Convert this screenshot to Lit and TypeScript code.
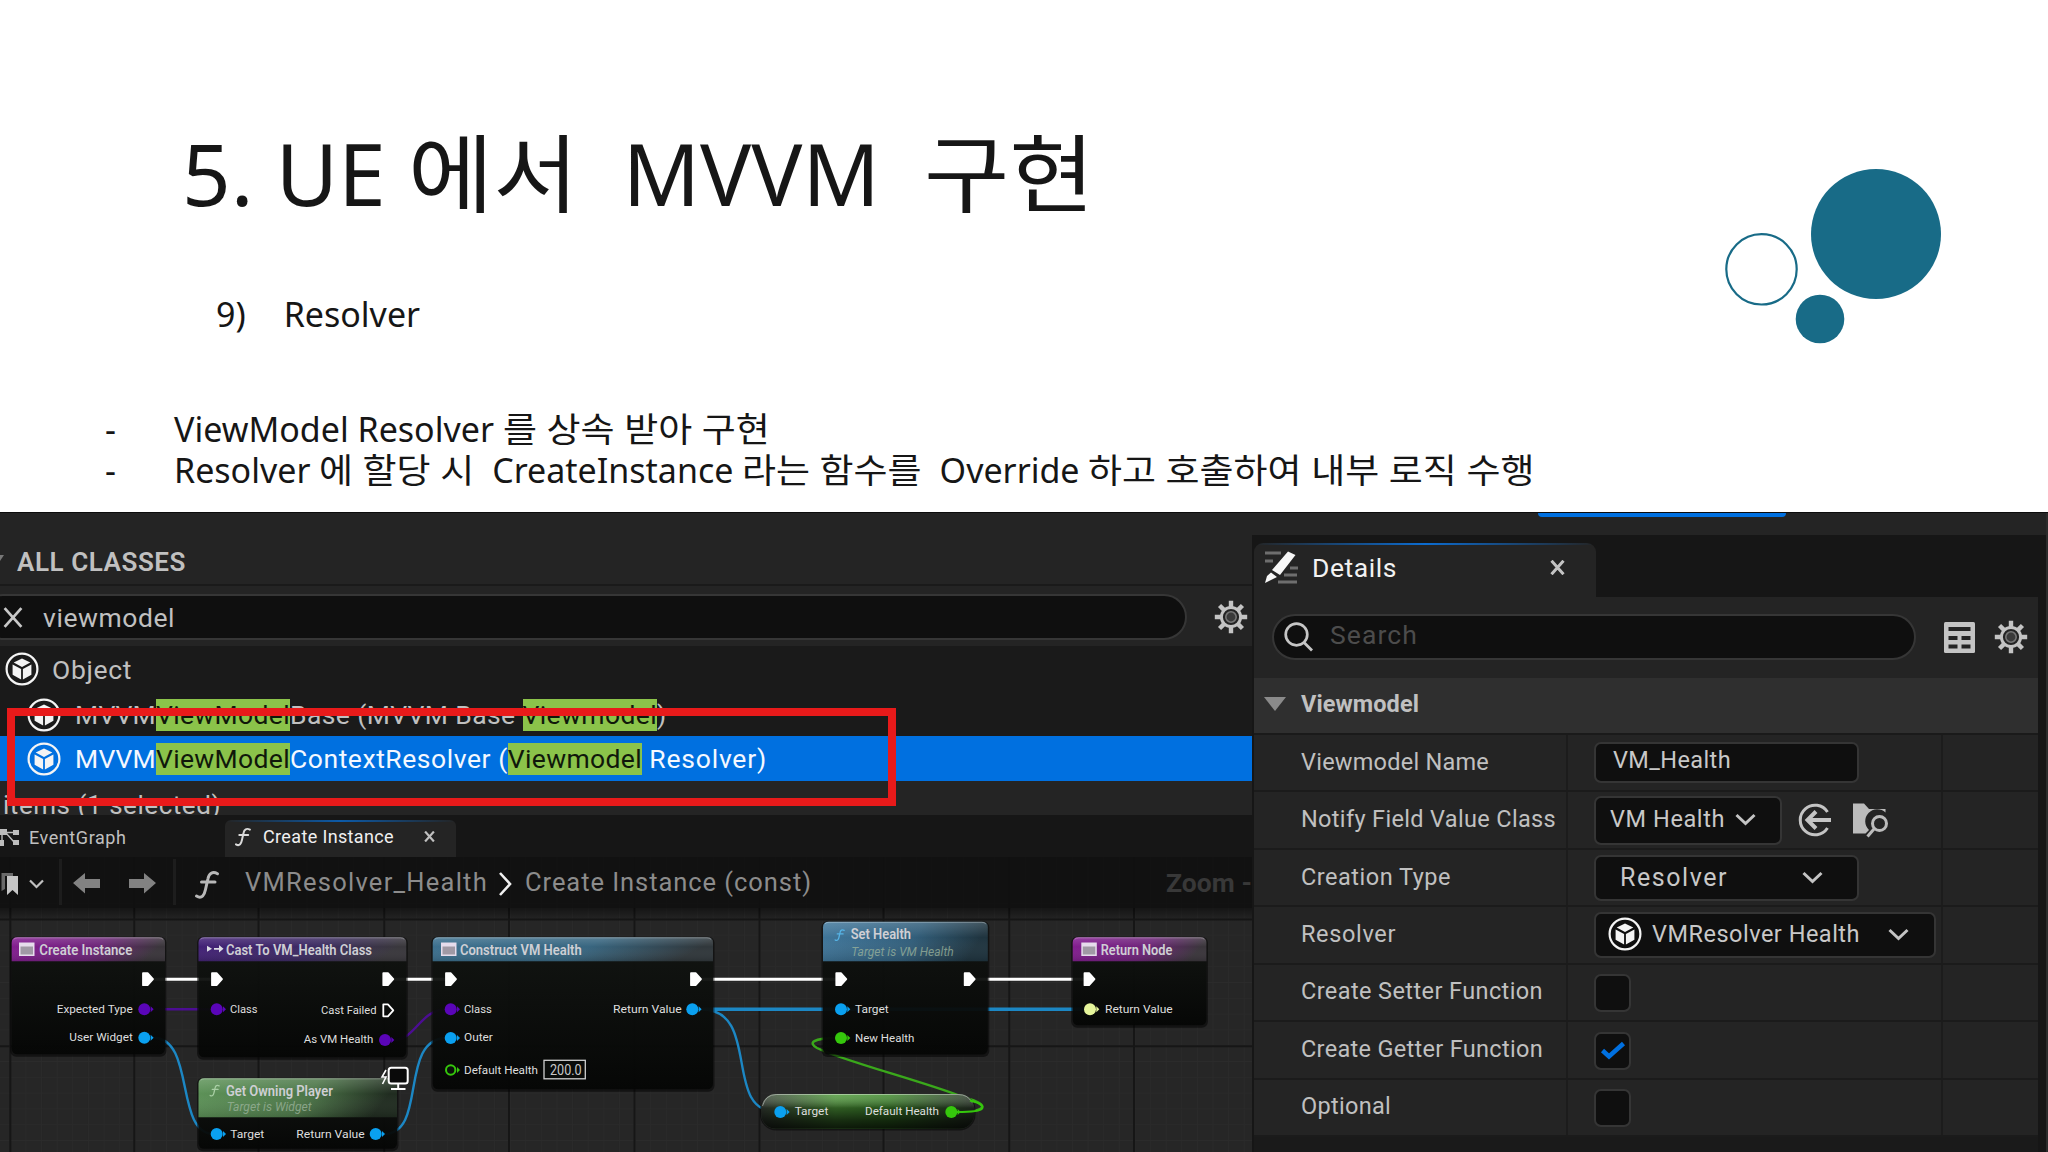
import { LitElement, html, svg, css, nothing } from "lit";
import { customElement } from "lit/decorators.js";

const cube = html`<svg class="cube" viewBox="0 0 34 34">
  <circle cx="17" cy="17" r="15.4" fill="none" stroke="currentColor" stroke-width="2.2" />
  <path fill="currentColor" d="M17 6.5 25.3 10.6 17 15 8.7 10.6ZM7.6 12.6 16.1 17v10.6L7.6 22.8ZM26.4 12.6 17.9 17v10.6l8.5-4.8Z" />
</svg>`;

const gear = html`<svg class="gear" viewBox="0 0 34 34">
  <g stroke="#c4c4c4" stroke-width="4.4">
    ${[0, 45, 90, 135].map((a) => svg`<path d="M17 .8V7M17 27v6.2" transform="rotate(${a} 17 17)" />`)}
  </g>
  <circle cx="17" cy="17" r="9.6" fill="#242424" stroke="#c4c4c4" stroke-width="3" />
  <circle cx="17" cy="17" r="5.2" fill="#3a3a3a" stroke="#777" stroke-width="1.6" />
</svg>`;

const chevron = html`<svg class="chevron" viewBox="0 0 21 13">
  <path d="M1.5 2 10.5 10.5 19.5 2" fill="none" stroke="#c4c4c4" stroke-width="3" />
</svg>`;

const cross = (cls: string) => html`<svg class=${cls} viewBox="0 0 20 20">
  <path d="M2 1 18 19M18 1 2 19" fill="none" stroke="currentColor" stroke-width="4" />
</svg>`;

/** Text tracked out (or in) to a given width. */
const fit = (text: string, width: number, cls = "") =>
  html`<span class="fit ${cls}" data-width=${width}>${text}</span>`;

/** Hangul run, widened so that each syllable fills a full em. */
const ko = (text: string) => html`<span class="ko">${text}</span>`;
const HANGUL_STRETCH = 1.087;

const func = (x: number, y: number, h: number, color: string) => svg`
  <g transform="translate(${x} ${y}) scale(${h / 28})" fill="none" stroke=${color} stroke-width="3" stroke-linecap="round">
    <path d="M1.5 25.5C7 29 9.500 24 10.500 19L13 8C14 3 17.500 .5 22.500 3.200M6.500 11.500H20" />
  </g>`;

const word = (x: number, y: number, w: number, text: string, cls = "pin") =>
  svg`<text class=${cls} x=${x} y=${y} textLength=${w} lengthAdjust="spacingAndGlyphs">${text}</text>`;

const exec = (x: number, y = 979.2, open = false) => svg`
  <path d="M${x + 1} ${y - 6}h4.600l5.400 6-5.400 6h-4.600Z" fill=${open ? "none" : "#fff"} stroke="#fff" stroke-width="1.800" stroke-linejoin="round" />`;

const BLUE = "#0aa0f0";
const VIOLET = "#5a05b8";
const GREEN = "#35c70c";

const dot = (x: number, y: number, color: string, open = false) => svg`
  <circle cx=${x} cy=${y} r=${open ? 4.7 : 6} fill=${open ? "#0c100c" : color} stroke=${color} stroke-width=${open ? 2 : 0} />
  <path d="M${x + 6.3} ${y - 3}l3 3-3 3Z" fill=${color} />`;

interface GraphNode {
  x: number; y: number; w: number; h: number; head: number; fill: string;
}
const box = (n: GraphNode) => svg`
  <rect x=${n.x - 1.5} y=${n.y - .5} width=${n.w + 3} height=${n.h + 3} rx="6" fill="#000" opacity=".5" />
  <rect x=${n.x} y=${n.y} width=${n.w} height=${n.h} rx="5.500" fill="url(#body)" />
  <path fill="url(#${n.fill})" d="M${n.x} ${n.y + n.head}V${n.y + 5.5}q0-5.500 5.500-5.500H${n.x + n.w - 5.5}q5.500 0 5.500 5.500V${n.y + n.head}Z" />
  <path fill="url(#gloss)" d="M${n.x} ${n.y + n.head}V${n.y + 5.5}q0-5.500 5.500-5.500H${n.x + n.w - 5.5}q5.500 0 5.500 5.500V${n.y + n.head}Z" />
  <path fill="none" stroke="#fff" stroke-opacity=".3" d="M${n.x + 2} ${n.y + 2}q1.500-1.500 4-1.500H${n.x + n.w - 6}q2.500 0 4 1.500" />`;

const form = (x: number) => svg`
  <rect x=${x} y="942.500" width="15.500" height="13.500" fill="#e6dcec" />
  <rect x=${x + 1.5} y="946.500" width="12.500" height="8" fill="#000" opacity=".3" />`;

const ramp = (id: string, a: string, b: string, c: string) => svg`
  <linearGradient id=${id} x1="0" x2="1" y1="0" y2=".15">
    <stop offset="0" stop-color=${a} /><stop offset=".6" stop-color=${b} /><stop offset="1" stop-color=${c} />
  </linearGradient>`;

const COLS = [10.3, 134.3, 258.5, 384.3, 509, 634.5, 759.5, 883.5, 1009.3, 1134];
const MINOR_X = Array.from({ length: 80 }, (_, i) => 10.3 + i * 15.62);
const MINOR_Y = Array.from({ length: 17 }, (_, i) => 903.5 + i * 15.8);

@customElement("node-graph")
class NodeGraph extends LitElement {
  static styles = css`
    :host { display: block; height: 100%; }
    svg { display: block; width: 1252px; height: 295px; }
    text { font-family: Roboto, "Liberation Sans", sans-serif; }
    .pin { font-size: 11.4px; fill: #dedede; }
    .title { font-size: 14.5px; font-weight: 600; fill: #cfcfd4; }
    .sub { font-size: 12px; font-style: italic; fill: #9db59d; opacity: .75; }
    .num { font-size: 14px; fill: #c8c8c8; }
  `;

  render() {
    return html`<svg viewBox="0 857 1252 295">
      <defs>
        <linearGradient id="body" x2="0" y2="1">
          <stop offset="0" stop-color="#121512" stop-opacity=".9" /><stop offset="1" stop-color="#050605" stop-opacity=".92" />
        </linearGradient>
        <linearGradient id="gloss" x2="0" y2="1">
          <stop offset="0" stop-color="#fff" stop-opacity=".16" /><stop offset=".4" stop-color="#fff" stop-opacity="0" />
          <stop offset="1" stop-color="#000" stop-opacity=".12" />
        </linearGradient>
        <linearGradient id="fade" x2="0" y2="1">
          <stop offset="0" stop-color="#000" stop-opacity=".45" /><stop offset="1" stop-color="#000" stop-opacity="0" />
        </linearGradient>
        ${ramp("purple", "#841c92", "#6d2478", "#3a353b")}
        ${ramp("indigo", "#432078", "#3c2b62", "#39373c")}
        ${ramp("steel", "#3c708f", "#386680", "#30373b")}
        ${ramp("sea", "#41789d", "#325e7a", "#1f343f")}
        ${ramp("moss", "#5e9459", "#4c7648", "#202c20")}
        <linearGradient id="lime">
          <stop offset="0" stop-color="#3c453b" /><stop offset=".35" stop-color="#4f9a3a" />
          <stop offset=".6" stop-color="#3f8a2c" /><stop offset="1" stop-color="#2f3a2e" />
        </linearGradient>
        <linearGradient id="shade" x2="0" y2="1">
          <stop offset="0" stop-color="#fff" stop-opacity=".15" /><stop offset=".4" stop-color="#000" stop-opacity=".4" />
          <stop offset=".75" stop-color="#000" stop-opacity=".7" /><stop offset="1" stop-color="#000" stop-opacity=".85" />
        </linearGradient>
      </defs>
      <rect y="857" width="1252" height="295" fill="#262626" />
      <g stroke="#2b2b2b" stroke-width="1">
        ${MINOR_X.map((x) => svg`<path d="M${x} 857V1152" />`)}
        ${MINOR_Y.map((y) => svg`<path d="M0 ${y}H1252" />`)}
      </g>
      <g stroke="#161616" stroke-width="2">
        ${COLS.map((x) => svg`<path d="M${x} 857V1152" />`)}
        <path d="M0 919.500H1252M0 1046.300H1252" />
      </g>
      <rect y="908" width="1252" height="13" fill="url(#fade)" />

      <g fill="none">
        <path stroke="#fff" stroke-width="3" d="M153 979.200H212M394 979.200H446M701 979.200H836M975 979.200H1085" />
        <path stroke=${VIOLET} stroke-opacity=".75" stroke-width="2.400" d="M153 1009.300H212M394 1040C415 1040 420 1010 446 1009.300" />
        <path stroke="#1c87c4" stroke-width="3.400" d="M701 1009.300H1085" />
        <g stroke="#1c87c4" stroke-width="2.400">
          <path d="M153 1037.700C196 1037.700 174 1134 214 1134" />
          <path d="M384 1134C428 1134 398 1038 447 1038" />
          <path d="M701 1009.300C762 1009.300 722 1112 777 1112" />
        </g>
        <path stroke="#3aa81b" stroke-width="2.400" d="M838 1038C812 1038 808 1043 817 1048C840 1060 925 1082 960 1096C974 1100 984 1104 982 1107Q980 1112 956 1112" />
      </g>

      ${box({ x: 11.7, y: 937.3, w: 153.3, h: 117, head: 24, fill: "purple" })}
      ${form(19)} ${word(39.3, 955, 93, "Create Instance", "title")}
      ${exec(142)}
      ${word(56.7, 1013, 76, "Expected Type")} ${dot(144.3, 1009.3, VIOLET)}
      ${word(69.3, 1041, 63.5, "User Widget")} ${dot(144.3, 1037.8, BLUE)}

      ${box({ x: 198.5, y: 937.3, w: 207.800, h: 120, head: 24, fill: "indigo" })}
      <path d="M207 945.800l5 3-5 3ZM214 948h3v1.800h-3ZM217 948h2v-3l4.500 3.800-4.500 3.800v-2.800h-2Z" fill="#dcdce4" />
      ${word(226, 955, 146, "Cast To VM_Health Class", "title")}
      ${exec(211)} ${exec(382.3)}
      ${dot(216.7, 1009.3, VIOLET)} ${word(230, 1013, 27.5, "Class")}
      ${word(321, 1014, 55.5, "Cast Failed")} ${exec(382.3, 1010.3, true)}
      ${word(303.7, 1043, 69.7, "As VM Health")} ${dot(385, 1040, VIOLET)}

      ${box({ x: 198.5, y: 1078.3, w: 198.5, h: 70.5, head: 39, fill: "moss" })}
      ${func(209.5, 1084.5, 12, "#a9cfa5")}
      ${word(226, 1095.5, 106.800, "Get Owning Player", "title")}
      ${word(226.7, 1111.3, 85, "Target is Widget", "sub")}
      ${dot(216.7, 1134, BLUE)} ${word(230.3, 1137.500, 34, "Target")}
      ${word(296.3, 1137.500, 68.400, "Return Value")} ${dot(375.7, 1134, BLUE)}
      <g stroke="#fff" stroke-width="2" fill="#0a0a0a">
        <rect x="388.700" y="1067.700" width="19" height="15.800" rx="2.500" />
        <path d="M398.200 1084v5M391 1089h14.500" />
        <path stroke-width="1.600" fill="none" d="M386 1070l-4 7h4l-3.500 7" />
      </g>

      ${box({ x: 432.7, y: 937.3, w: 280.3, h: 152, head: 24, fill: "steel" })}
      ${form(441)} ${word(460, 955, 121.700, "Construct VM Health", "title")}
      ${exec(445)} ${exec(690)}
      ${dot(450.7, 1009.3, VIOLET)} ${word(464, 1013, 27.800, "Class")}
      ${word(613, 1013, 68.700, "Return Value")} ${dot(692.3, 1009.3, BLUE)}
      ${dot(450.7, 1038, BLUE)} ${word(464, 1041, 28.800, "Outer")}
      ${dot(450.7, 1070, GREEN, true)} ${word(464, 1074, 74, "Default Health")}
      <rect x="544" y="1060.300" width="41.300" height="18.500" fill="#0a0c0a" stroke="#d0d0d0" stroke-width="1.300" />
      ${word(550, 1075.300, 31.700, "200.0", "num")}

      ${box({ x: 823, y: 921.8, w: 164.800, h: 132.800, head: 39.5, fill: "sea" })}
      ${func(834.5, 929, 12, "#56b4e6")}
      ${word(850.7, 939, 60.300, "Set Health", "title")}
      ${word(851.3, 955.5, 102.400, "Target is VM Health", "sub")}
      ${exec(835.3)} ${exec(963.700)}
      ${dot(841, 1009.3, BLUE)} ${word(855, 1013, 33.700, "Target")}
      ${dot(841, 1038, GREEN)} ${word(855, 1042, 59.300, "New Health")}

      ${box({ x: 1072.7, y: 937.3, w: 133.700, h: 88, head: 24, fill: "purple" })}
      ${form(1081.3)} ${word(1100.7, 955, 71.700, "Return Node", "title")}
      ${exec(1083.500)}
      ${dot(1090, 1009.3, "#e6f59b")} ${word(1105, 1013, 67.700, "Return Value")}

      <rect x="760" y="1094" width="215.500" height="36.500" rx="16" fill="#000" opacity=".5" />
      <rect x="761" y="1094" width="213.300" height="34.800" rx="15" fill="url(#lime)" />
      <rect x="761" y="1094" width="213.300" height="34.800" rx="15" fill="url(#shade)" />
      <path d="M762.500 1106q3-11.500 14-11.500H958q10 0 14 8" fill="none" stroke="#fff" stroke-opacity=".4" />
      <path stroke=${GREEN} fill="none" stroke-width="2.200" d="M970 1100.500C980 1103 984 1106 982 1108.500Q980 1112 957 1112" />
      ${dot(780.3, 1112, BLUE)} ${word(794.7, 1115.200, 33.600, "Target")}
      ${word(865, 1115.200, 74, "Default Health")} ${dot(951.3, 1112, GREEN)}
    </svg>`;
  }
}

@customElement("app-root")
class AppRoot extends LitElement {
  static styles = css`
    :host {
      display: block; width: 2048px; height: 1152px; overflow: hidden; position: relative;
      background: #fff; color: #c0c0c0; font-family: Roboto, "Liberation Sans", sans-serif; font-size: 25px;
    }
    * { box-sizing: border-box; }
    svg { display: block; flex: none; }
    .fit { white-space: pre; display: inline-block; }
    .ko { display: inline-block; white-space: pre; transform-origin: 0 0; }
    .slide {
      height: 512px; padding: 123px 0 0 105px; color: #161616;
      font-family: "Noto Sans", "Noto Sans CJK KR", sans-serif; position: relative; white-space: pre;
    }
    .slide h1 { margin: 0 0 71px 77px; font-size: 85.3px; line-height: 100px; font-weight: 400; }
    .topic { display: flex; gap: 38px; margin: 0 0 74px 111px; font-size: 34px; line-height: 41px; }
    .bullets { font-size: 34px; line-height: 41.3px; display: grid; grid-template-columns: 69px auto; }
    .art { position: absolute; left: 1720px; top: 160px; }
    .editor { display: grid; grid-template-columns: 1252px 796px; height: 640px; background: #161616; border-top: 1px solid #0c0c0c; }
    .left { display: grid; grid-template-rows: 73px 60px 90px 45px 34px 42px 295px; overflow: hidden; min-width: 0; }
    .caption { background: #242424; border-bottom: 2px solid #1a1a1a; padding: 27px 0 0 17px; font-weight: 600; font-size: 26px; line-height: 46px; margin-top: -1px; display: flex; }
    .caption svg { margin: 16px 0 0 -17px; width: 17px; height: 8px; }
    .findbar { background: #242424; display: flex; align-items: center; padding: 2px 4px 0 0; justify-content: space-between; }
    .find { width: 1207px; margin-left: -20px; height: 46px; border: 2px solid #363636; border-radius: 23px; background: #0f0f0f; display: flex; align-items: center; padding-left: 20px; gap: 19px; font-size: 26.5px; }
    .wide { width: 22px; height: 21px; color: #c8c8c8; }
    .wide path { stroke-width: 2.6; }
    .cube { width: 34px; height: 34px; color: #f4f4f4; }
    .gear { width: 34px; height: 34px; }
    .classes { background: #1a1a1a; font-size: 26.5px; }
    .class { display: flex; align-items: center; height: 45px; padding-left: 27px; gap: 14px; white-space: pre; }
    .class.parent { padding-left: 5px; gap: 13px; height: 46px; }
    .class.picked { background: #0070e0; color: #f4f8ff; font-size: 26.5px; }
    .line { display: flex; }
    .hit { background: #8bc34a; color: #10180a; line-height: 32px; }
    .count { background: #242424; font-size: 26px; line-height: 40px; padding: 4px 0 0 3px; overflow: hidden; }
    .mark { position: absolute; left: 6.5px; top: 708px; width: 889.5px; height: 98px; border: 8px solid #e81a1a; }
    .tabs { display: flex; align-items: center; background: #161616; font-size: 18px; padding-top: 2px; }
    .tab { display: flex; align-items: center; }
    .tab.idle { width: 225px; gap: 10px; }
    .tab.open { width: 231px; height: 37px; margin-top: 3px; padding-bottom: 4px; background: linear-gradient(90deg, #242424, #0c5aa8 50%, #242424) 0 0 / 100% 2px no-repeat #242424; border-radius: 6px 6px 0 0; color: #f0f0f0; padding-left: 10px; }
    .tab.open .fit { margin-left: 12px; margin-right: 30px; }
    .small { width: 11px; height: 11px; color: #c0c0c0; }
    .board { position: relative; height: 295px; }
    .tools { position: absolute; left: 0; top: 0; width: 1252px; height: 51px; background: #0f0f0fe6; display: flex; align-items: center; color: #8c8c8c; font-size: 25.5px; padding-bottom: 1px; }
    .tools .sep { width: 3px; height: 46px; background: #1d1d1d; }
    .tools .zoom { font-weight: 700; color: #383838; margin-left: auto; font-size: 26.5px; }
    .right { position: relative; display: grid; grid-template-rows: 22px 62px 81px 55px 404px 16px; padding: 0 10px 0 2px; background: linear-gradient(90deg, #161616 794px, #2c2c2c 794px); }
    .strip { background: #242424; margin: 0 -8px 0 -2px; padding-left: 286px; }
    .strip div { width: 248px; height: 4px; background: #0070e0; border-radius: 0 0 6px 6px; }
    .dtab { width: 342px; height: 54px; margin-top: 8px; border-radius: 9px 9px 0 0; padding: 0 31px 6px 10px; color: #f2f2f2; font-size: 26.5px;
      background: linear-gradient(90deg, #242424, #0c6cd0 50%, #242424) 0 0 / 100% 2px no-repeat #242424; display: flex; align-items: center; }
    .dtab .fit { margin: 0 auto 0 14px; }
    .close { width: 15px; height: 15px; color: #c4c4c4; }
    .dfind { background: #242424; display: flex; align-items: center; padding: 0 9px 1px 18px; }
    .dfind .pill { width: 644px; height: 46px; border: 2px solid #363636; border-radius: 23px; background: #0f0f0f; display: flex; align-items: center; padding: 0 0 5px 10px; gap: 16px; color: #4c4c4c; font-size: 26.5px; margin-right: 28px; }
    .dfind .pill svg { margin-top: 4px; }
    .dfind .gear { margin-left: 19px; }
    .section { background: #2f2f2f; display: flex; align-items: center; gap: 15px; padding: 0 0 3px 10px; font-weight: 700; font-size: 23.5px; }
    .rows { display: grid; grid-template-rows: repeat(7, 1fr); border-top: 2px solid #1a1a1a; }
    .row { display: grid; grid-template-columns: 312px 375px auto; background: #242424; border-bottom: 2px solid #1b1b1b; }
    .row > div { display: flex; align-items: center; border-left: 2px solid #1c1c1c; padding-left: 26px; font-size: 23.5px; }
    .row > .name { border: 0; padding: 0 0 2px 47px; }
    .field { background: #0f0f0f; border: 2px solid #353535; border-radius: 7px; display: flex; align-items: center; color: #c8c8c8; flex: none; }
    .text { width: 265px; height: 41px; padding: 0 0 5px 17px; }
    .klass { width: 188px; height: 49px; padding: 0 24px 2px 14px; justify-content: space-between; }
    .kind { width: 265px; height: 46px; padding: 0 34px 0 24px; justify-content: space-between; font-size: 25px; }
    .asset { width: 342px; height: 46px; padding: 0 25px 1px 12px; }
    .asset .fit { margin: 0 auto 0 10px; }
    .check { width: 37px; height: 38px; margin-top: 2px; justify-content: center; }
    .chevron { width: 21px; height: 13px; }
    .use { margin-left: 16px; }
    .browse { margin-left: 21px; }
    .end { background: #1a1a1a; }
  `;

  firstUpdated() {
    this.renderRoot.querySelectorAll<HTMLElement>(".fit").forEach((el) => {
      const target = Number(el.dataset.width);
      const gap = target - el.getBoundingClientRect().width;
      el.style.letterSpacing = `${gap / (el.textContent ?? " ").length}px`;
    });
    this.renderRoot.querySelectorAll<HTMLElement>(".ko").forEach((el) => {
      const width = el.getBoundingClientRect().width;
      el.style.marginRight = `${width * (HANGUL_STRETCH - 1)}px`;
      el.style.transform = `scaleX(${HANGUL_STRETCH})`;
    });
  }

  private row(name: string, width: number, value: unknown) {
    return html`<div class="row">
      <div class="name">${fit(name, width)}</div>
      <div>${value}</div>
      <div></div>
    </div>`;
  }

  private box(checked: boolean) {
    return html`<div class="field check">
      ${checked
        ? html`<svg width="26" height="20" viewBox="0 0 26 20"><path d="M2.500 9.500 9 15.500 23.500 2.500" fill="none" stroke="#0070e0" stroke-width="4.600" /></svg>`
        : nothing}
    </div>`;
  }

  render() {
    return html`
      <section class="slide"><h1>5. UE ${ko("에서")}  MVVM  ${ko("구현")}</h1><div class="topic"><span>9)</span><span>Resolver</span></div><div class="bullets"><span>-</span><span>ViewModel Resolver ${ko("를 상속 받아 구현")}</span><span>-</span><span>Resolver ${ko("에 할당 시")}  CreateInstance ${ko("라는 함수를")}  Override ${ko("하고 호출하여 내부 로직 수행")}</span></div><svg class="art" width="230" height="200" viewBox="1720 160 230 200">
          <circle cx="1876" cy="234" r="65" fill="#186b87" />
          <circle cx="1761.500" cy="269.300" r="35.200" fill="none" stroke="#186b87" stroke-width="2.200" />
          <circle cx="1820" cy="319" r="24.300" fill="#186b87" />
        </svg></section>

      <section class="editor">
        <div class="left">
          <div class="caption">
            <svg viewBox="0 0 17 8"><path d="M0 0H4L0 6Z" fill="#777" /></svg>
            ${fit("ALL CLASSES", 169)}
          </div>
          <div class="findbar">
            <div class="find">${cross("wide")}${fit("viewmodel", 132)}</div>
            ${gear}
          </div>
          <div class="classes">
            <div class="class parent">${cube}${fit("Object", 80)}</div>
            <div class="class">
              ${cube}
              <div class="line">${fit("MVVM", 81)}${fit("ViewModel", 134, "hit")}${fit("Base (MVVM Base ", 232.5)}${fit("Viewmodel", 134.5, "hit")}${fit(")", 9)}</div>
            </div>
          </div>
          <div class="class picked">
            ${cube}
            <div class="line">${fit("MVVM", 81)}${fit("ViewModel", 134, "hit")}${fit("ContextResolver (", 217.8)}${fit("Viewmodel", 134.2, "hit")}${fit(" Resolver)", 125)}</div>
          </div>
          <div class="count">${fit("items (1 selected)", 218)}</div>
          <div class="tabs">
            <div class="tab idle">
              <svg width="19" height="18" viewBox="0 0 19 18">
                <path d="M0 1h7v6H0ZM0 12h4v6H0ZM13 2h6v5h-6ZM13 12h6v5h-6Z" fill="#bdbdbd" />
                <path d="M6 4.500H14M6 5 14 14M2 6V13" stroke="#bdbdbd" stroke-width="1.400" fill="none" />
              </svg>
              ${fit("EventGraph", 97.5)}
            </div>
            <div class="tab open">
              <svg width="16" height="20" viewBox="0 0 16 20">${func(0, 0.5, 18.5, "#dadada")}</svg>
              ${fit("Create Instance", 131)}
              ${cross("small")}
            </div>
          </div>
          <div class="board">
            <node-graph></node-graph>
            <div class="tools">
              <svg width="59" height="51" viewBox="0 0 59 51">
                <path d="M1.500 16H13v3H5V32L1.500 34Z" fill="#6a6a6a" />
                <path d="M7 19H18V38L12.500 33 7 38Z" fill="#c6c6c6" />
                <path d="M30 23.500 36.500 30 43 23.500" fill="none" stroke="#c0c0c0" stroke-width="2.200" />
              </svg>
              <div class="sep"></div>
              <svg width="111" height="51" viewBox="62 0 111 51">
                <path d="M73 26 85 16V22H100V31H85V36.500ZM156 26 144 16V22H129V31H144V36.500Z" fill="#828282" />
              </svg>
              <div class="sep"></div>
              <svg width="69" height="51" viewBox="176 0 69 51">${func(195, 13.5, 28, "#b8b8b8")}</svg>
              ${fit("VMResolver_Health", 243)}
              <svg width="37" height="51" viewBox="488 0 37 51"><path d="M500 16 510 27 500 38" fill="none" stroke="#f0f0f0" stroke-width="2.600" /></svg>
              ${fit("Create Instance (const)", 287)}
              ${fit("Zoom -", 86, "zoom")}
            </div>
          </div>
        </div>

        <div class="right">
          <div class="strip"><div></div></div>
          <div class="dtab">
            <svg width="34" height="33" viewBox="0 0 34 33">
              <path d="M1 2H17M1 10H9M26 17H34M20 24H33M14 31H33" stroke="#6e6e6e" stroke-width="3" />
              <path d="M24 .5 31.500 4 16 24 8 19ZM7 21.500 13 26 1 32 3 25Z" fill="#f6f6f6" />
            </svg>
            ${fit("Details", 85)}
            ${cross("close")}
          </div>
          <div class="dfind">
            <div class="pill">
              <svg width="30" height="30" viewBox="0 0 30 30"><circle cx="12.500" cy="12.500" r="10.800" fill="none" stroke="#c6c6c6" stroke-width="2.700" /><path d="M19.500 20 28 28.500" stroke="#c6c6c6" stroke-width="2.800" /></svg>
              ${fit("Search", 88)}
            </div>
            <svg width="31" height="31" viewBox="0 0 31 31">
              <rect width="31" height="31" rx="1.500" fill="#c4c4c4" />
              <path d="M4.500 5H26.500V9H4.500ZM4.500 14H13.500V18H4.500ZM17.500 14H26.500V18H17.500ZM4.500 22.500H13.500V26.500H4.500ZM17.500 22.500H26.500V26.500H17.500Z" fill="#242424" />
            </svg>
            ${gear}
          </div>
          <div class="section">
            <svg width="22" height="14" viewBox="0 0 22 14"><path d="M0 0H22L11 14Z" fill="#8a8a8a" /></svg>
            ${fit("Viewmodel", 118)}
          </div>
          <div class="rows">
            ${this.row("Viewmodel Name", 188, html`<div class="field text">${fit("VM_Health", 118)}</div>`)}
            ${this.row("Notify Field Value Class", 255, html`
              <div class="field klass">${fit("VM Health", 115)}${chevron}</div>
              <svg class="use" width="34" height="34" viewBox="0 0 34 34">
                <path d="M29.500 9A14.800 14.800 0 1 0 29.500 25" fill="none" stroke="#c4c4c4" stroke-width="3" />
                <path d="M9 17H33M18 8.500 9.500 17 18 25.500" fill="none" stroke="#c4c4c4" stroke-width="4" />
              </svg>
              <svg class="browse" width="36" height="35" viewBox="0 0 36 35">
                <path d="M0 .5H11L16 6H32.500V9.500A11 11 0 0 0 16 27L12.500 30.500H0Z" fill="#bcbcbc" />
                <circle cx="26.500" cy="20.500" r="7" fill="#242424" stroke="#bcbcbc" stroke-width="3" />
                <path d="M21 26 14.500 33.500" stroke="#bcbcbc" stroke-width="3" />
              </svg>`)}
            ${this.row("Creation Type", 150, html`<div class="field kind">${fit("Resolver", 108)}${chevron}</div>`)}
            ${this.row("Resolver", 95, html`<div class="field asset">${cube}${fit("VMResolver Health", 208)}${chevron}</div>`)}
            ${this.row("Create Setter Function", 242, this.box(false))}
            ${this.row("Create Getter Function", 242, this.box(true))}
            ${this.row("Optional", 90, this.box(false))}
          </div>
          <div class="end"></div>
        </div>
      </section>
      <div class="mark"></div>
    `;
  }
}
